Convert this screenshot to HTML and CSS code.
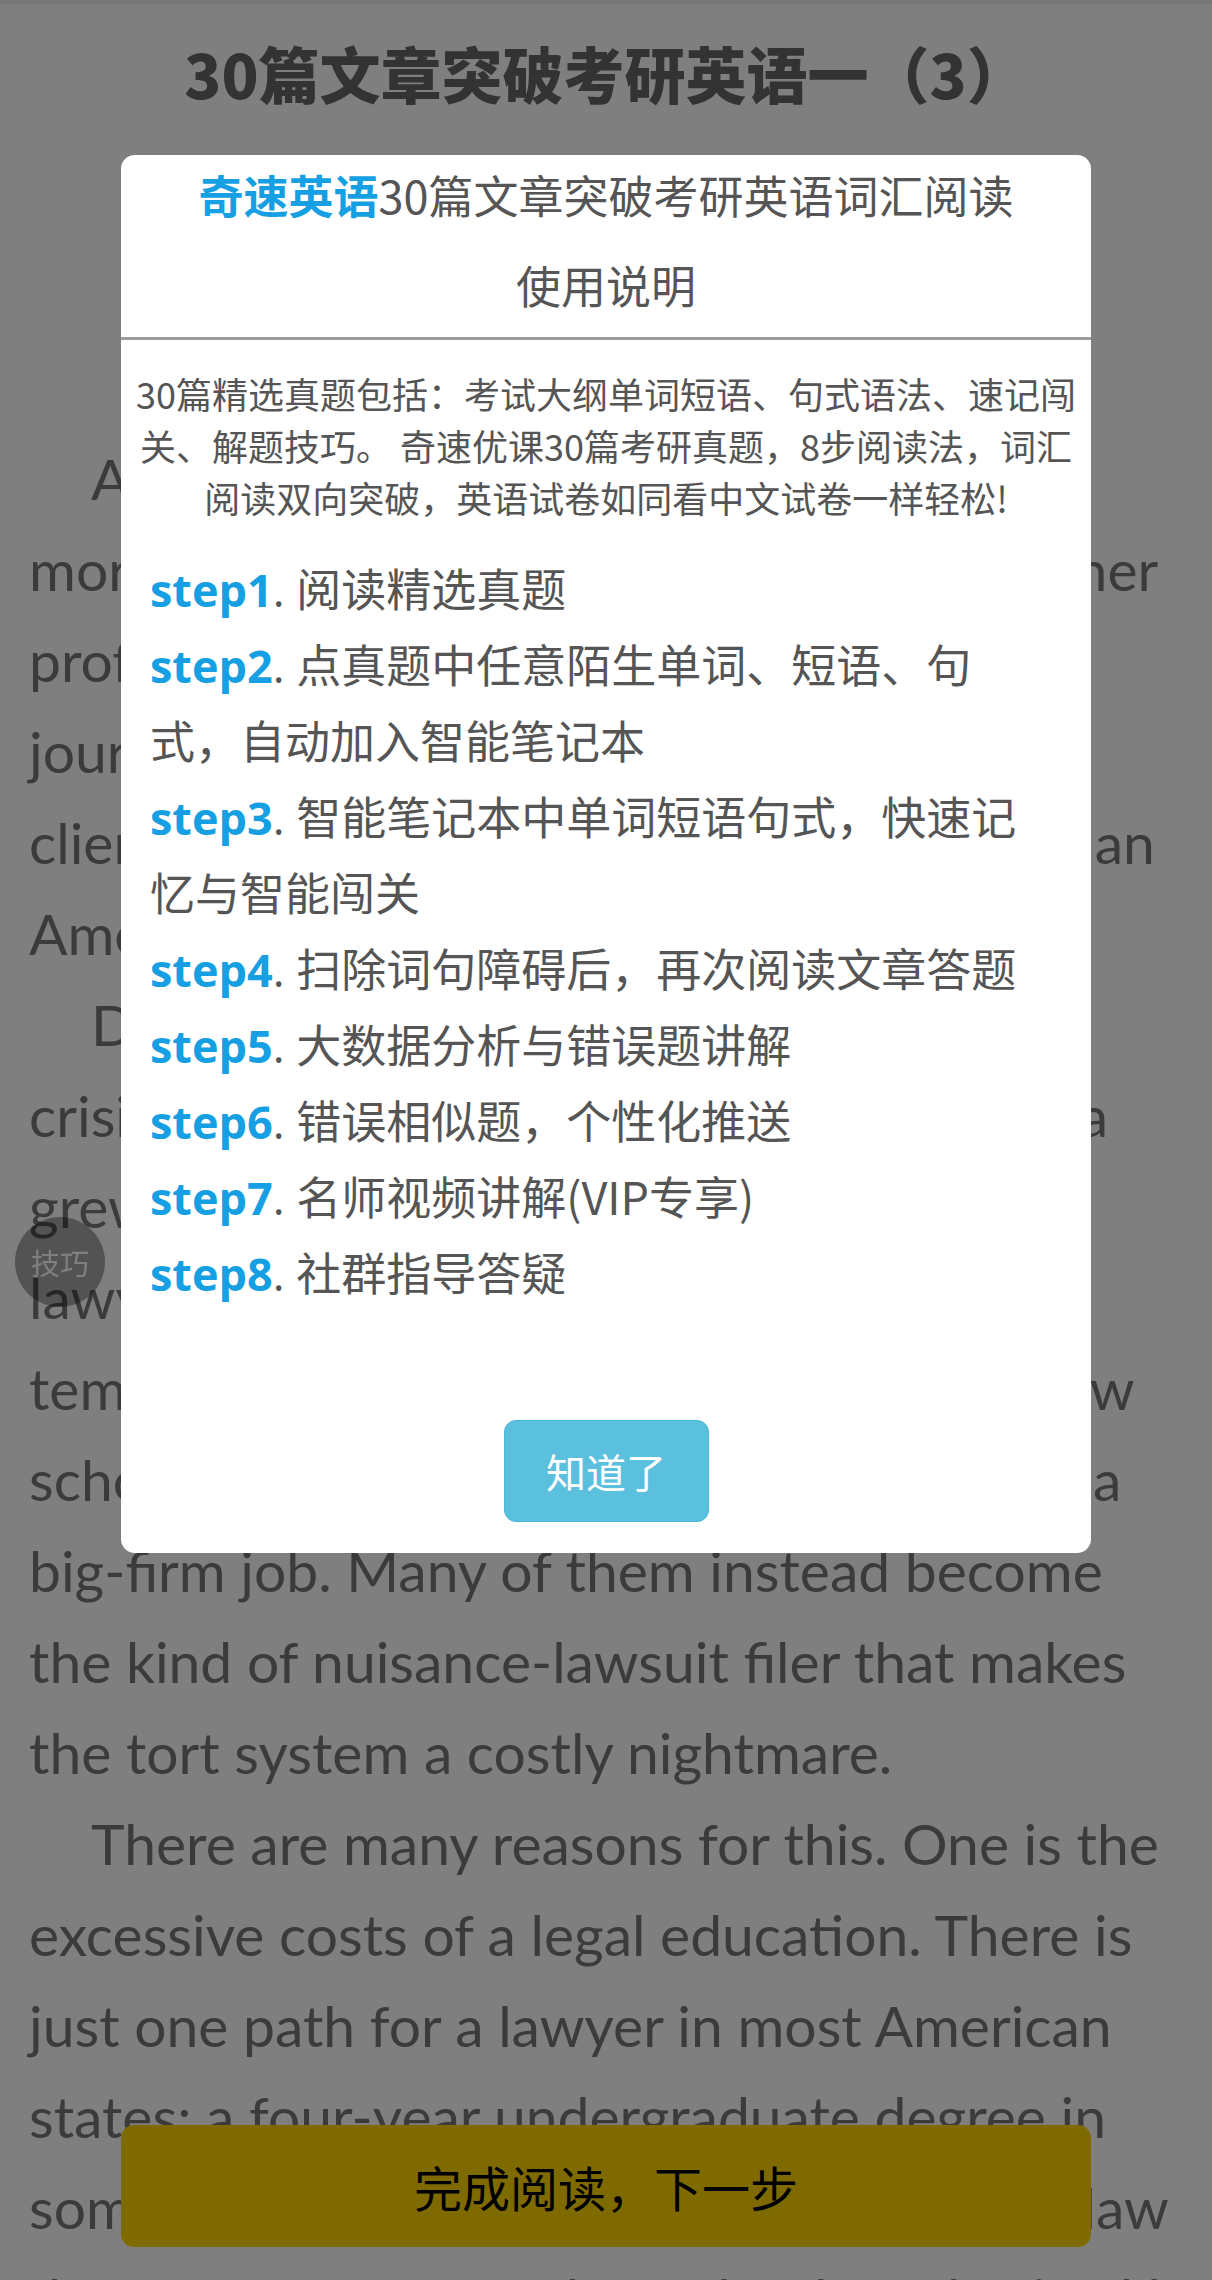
FILE: index.html
```html
<!DOCTYPE html>
<html lang="zh-CN">
<head>
<meta charset="utf-8">
<title>30篇文章突破考研英语一（3）</title>
<link rel="stylesheet" href="styles.css">
</head>
<body>
<div class="topbar"></div>
<h1 class="page-title">30篇文章突破考研英语一（3）</h1>
<div class="article">
  <p>All around the world, lawyers generate<br>more hostility than the members of any other<br>profession—with the possible exception of<br>journalism. But there are few places where<br>clients have more grounds for complaint than<br>America.</p>
  <p>During the decade before the economic<br>crisis, spending on legal services in America<br>grew twice as fast as inflation. The best<br>lawyers made skyscrapers-full of money,<br>tempting ever more students to pile into law<br>schools. But most law graduates never get a<br>big-firm job. Many of them instead become<br>the kind of nuisance-lawsuit filer that makes<br>the tort system a costly nightmare.</p>
  <p>There are many reasons for this. One is the<br>excessive costs of a legal education. There is<br>just one path for a lawyer in most American<br>states: a four-year undergraduate degree in<br>some unrelated subject, then a three-year law<br>degree at one of 200 law schools authorized by<br>the American Bar Association and an expensive<br>preparation for the bar exam.</p>
</div>

<div class="fab">技巧</div>
<div class="next-btn">完成阅读，下一步</div>

<div class="mask">
  <div class="modal">
    <div class="modal-title"><span class="brand">奇速英语</span>30篇文章突破考研英语词汇阅读</div>
    <div class="modal-sub">使用说明</div>
    <div class="divider"></div>
    <p class="intro">30篇精选真题包括：考试大纲单词短语、句式语法、速记闯关、解题技巧。 奇速优课30篇考研真题，8步阅读法，词汇阅读双向突破，英语试卷如同看中文试卷一样轻松!</p>
    <ul class="steps">
      <li><span class="step-label">step1</span><span class="step-dot">. </span>阅读精选真题</li>
      <li><span class="step-label">step2</span><span class="step-dot">. </span>点真题中任意陌生单词、短语、句式，自动加入智能笔记本</li>
      <li><span class="step-label">step3</span><span class="step-dot">. </span>智能笔记本中单词短语句式，快速记忆与智能闯关</li>
      <li><span class="step-label">step4</span><span class="step-dot">. </span>扫除词句障碍后，再次阅读文章答题</li>
      <li><span class="step-label">step5</span><span class="step-dot">. </span>大数据分析与错误题讲解</li>
      <li><span class="step-label">step6</span><span class="step-dot">. </span>错误相似题，个性化推送</li>
      <li><span class="step-label">step7</span><span class="step-dot">. </span>名师视频讲解(VIP专享)</li>
      <li><span class="step-label">step8</span><span class="step-dot">. </span>社群指导答疑</li>
    </ul>
    <div class="ok-btn">知道了</div>
  </div>
</div>
</body>
</html>
```
FILE: styles.css
```css
* {
  box-sizing: border-box;
  margin: 0;
  padding: 0;
}

html,
body {
  background: #ffffff;
  height: 2280px;
  overflow: hidden;
}

body {
  font-family: "Noto Sans CJK SC", sans-serif;
}

.topbar {
  height: 4px;
  background: #eeeeee;
}

.page-title {
  margin-top: 29px;
  text-align: center;
  font-size: 61px;
  font-weight: 900;
  line-height: 80px;
  color: #666666;
}

.article {
  margin-top: 320px;
  padding: 0 29px;
  font-family: Lato, "Noto Sans CJK SC", sans-serif;
  font-size: 57px;
  line-height: 91px;
  color: #777777;
  white-space: nowrap;
}

.article p {
  text-indent: 62px;
}

.fab {
  position: fixed;
  left: 15px;
  top: 1217px;
  width: 90px;
  height: 90px;
  border-radius: 50%;
  background: rgba(0, 0, 0, 0.35);
  color: #ffffff;
  font-size: 29px;
  display: flex;
  align-items: center;
  justify-content: center;
}

.next-btn {
  position: fixed;
  left: 121px;
  bottom: 33px;
  width: 970px;
  height: 122px;
  border-radius: 13px;
  background: #ffd400;
  color: #000000;
  font-size: 48px;
  display: flex;
  align-items: center;
  justify-content: center;
}

.mask {
  position: fixed;
  inset: 0;
  background: rgba(0, 0, 0, 0.5);
  display: flex;
  justify-content: center;
  align-items: flex-start;
  padding-top: 155px;
}

.modal {
  width: 970px;
  background: #ffffff;
  border-radius: 14px;
  padding-bottom: 31px;
  display: flex;
  flex-direction: column;
}

.modal-title {
  text-align: center;
  font-size: 45px;
  line-height: 80px;
  color: #555555;
}

.brand {
  color: #169fe2;
  font-weight: 700;
}

.modal-sub {
  margin-top: 10px;
  text-align: center;
  font-size: 45px;
  line-height: 80px;
  color: #555555;
}

.divider {
  margin-top: 12px;
  height: 3px;
  background: #9b9b9b;
}

.intro {
  margin-top: 27px;
  padding: 0 7px;
  text-align: center;
  font-size: 36px;
  line-height: 52px;
  color: #555555;
}

.steps {
  list-style: none;
  margin-top: 27px;
  padding: 0 71px 0 29px;
  font-size: 45px;
  line-height: 76px;
  color: #555555;
}

.step-label {
  font-family: "Open Sans", sans-serif;
  font-weight: 700;
  color: #169fe2;
  line-height: 1;
}

.step-dot {
  font-family: "Open Sans", sans-serif;
  line-height: 1;
}

.ok-btn {
  align-self: center;
  margin-top: 110px;
  width: 205px;
  height: 102px;
  background: #5bc0de;
  border: 1px solid #46b8da;
  border-radius: 12px;
  color: #ffffff;
  font-size: 40px;
  display: flex;
  align-items: center;
  justify-content: center;
}
```
